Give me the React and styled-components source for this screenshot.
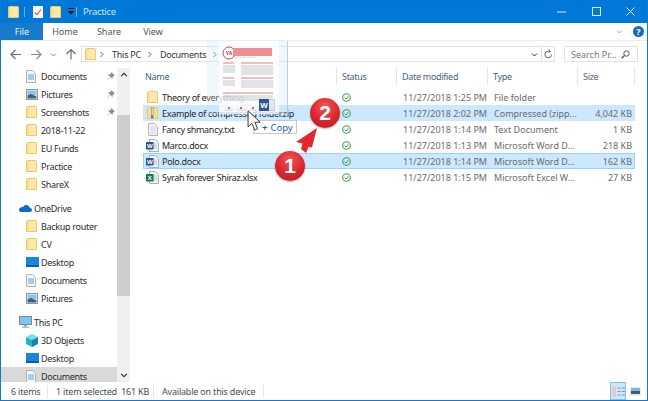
import React from "react"
import styled, { createGlobalStyle } from "styled-components"

const GlobalStyle = createGlobalStyle`
  html, body { margin: 0; padding: 0; background: #fff; }
  body { font-family: "Noto Sans", "Open Sans", sans-serif; font-size: 9px; color: #2b2b2b; }
`

const tabs = ["Home", "Share", "View"]

const sidebarGroups = [
  [
    { icon: "doc", label: "Documents", pin: true },
    { icon: "pic", label: "Pictures", pin: true },
    { icon: "folder", label: "Screenshots", pin: true },
    { icon: "folder", label: "2018-11-22" },
    { icon: "folder", label: "EU Funds" },
    { icon: "folder", label: "Practice" },
    { icon: "folder", label: "ShareX" },
  ],
  [
    { icon: "cloud", label: "OneDrive", top: true },
    { icon: "folder", label: "Backup router" },
    { icon: "folder", label: "CV" },
    { icon: "desktop", label: "Desktop" },
    { icon: "doc", label: "Documents" },
    { icon: "pic", label: "Pictures" },
  ],
  [
    { icon: "pc", label: "This PC", top: true },
    { icon: "cube", label: "3D Objects" },
    { icon: "desktop", label: "Desktop" },
    { icon: "doc", label: "Documents", current: true },
  ],
]

const files = [
  { icon: "folder", name: "Theory of everything", date: "11/27/2018 1:25 PM", type: "File folder", size: "" },
  { icon: "zip", name: "Example of compressed folder.zip", date: "11/27/2018 2:02 PM", type: "Compressed (zipp...", size: "4,042 KB", hl: "soft" },
  { icon: "txt", name: "Fancy shmancy.txt", date: "11/27/2018 1:14 PM", type: "Text Document", size: "1 KB" },
  { icon: "word", name: "Marco.docx", date: "11/27/2018 1:13 PM", type: "Microsoft Word D...", size: "218 KB" },
  { icon: "word", name: "Polo.docx", date: "11/27/2018 1:14 PM", type: "Microsoft Word D...", size: "162 KB", hl: "selected" },
  { icon: "excel", name: "Syrah forever Shiraz.xlsx", date: "11/27/2018 1:15 PM", type: "Microsoft Excel W...", size: "27 KB" },
]

function Glyph({ kind }) {
  switch (kind) {
    case "folder":
      return (
        <svg width="11" height="12" viewBox="0 0 11 12">
          <path d="M0.5 1.5 Q0.5 0.5 1.5 0.5 H9.5 Q10.5 0.5 10.5 1.5 V11.5 H0.5 Z" fill="#fbdc8a" stroke="#eec766" />
          <rect x="2.6" y="1" width="7.5" height="10" fill="#fde9ab" />
        </svg>
      )
    case "zip":
      return (
        <svg width="11" height="12" viewBox="0 0 11 12">
          <path d="M0.5 1.5 Q0.5 0.5 1.5 0.5 H9.5 Q10.5 0.5 10.5 1.5 V11.5 H0.5 Z" fill="#fbdc8a" stroke="#eec766" />
          <rect x="4" y="0.5" width="2.4" height="11" fill="#6f7f92" />
          <rect x="4.6" y="1" width="1.2" height="7" fill="#e8edf2" />
        </svg>
      )
    case "doc":
      return (
        <svg width="10" height="13" viewBox="0 0 10 13">
          <path d="M0.5 0.5 H6.5 L9.5 3.5 V12.5 H0.5 Z" fill="#f4f6f8" stroke="#a9b1ba" />
          <path d="M2 5 H8 M2 7 H8 M2 9 H8" stroke="#5da4dd" strokeWidth="1.1" />
        </svg>
      )
    case "txt":
      return (
        <svg width="10" height="13" viewBox="0 0 10 13">
          <path d="M0.5 0.5 H6.5 L9.5 3.5 V12.5 H0.5 Z" fill="#f5f5f5" stroke="#b5b5b5" />
          <path d="M2 4 H8 M2 6 H8 M2 8 H8 M2 10 H8" stroke="#d2d2d2" />
        </svg>
      )
    case "word":
    case "excel": {
      const tone = kind === "word" ? "#2b5797" : "#1f7a45"
      return (
        <svg width="13" height="13" viewBox="0 0 13 13">
          <path d="M3.5 0.5 H9.5 L12.5 3.5 V12.5 H3.5 Z" fill="#f4f5f7" stroke="#a6adb6" />
          <path d="M7 5 H11 M7 7 H11 M7 9 H11" stroke="#b9c0c9" />
          <rect x="0" y="3" width="7.5" height="7.5" fill={tone} />
          <text x="3.7" y="9" fontSize="6" fontWeight="700" fill="#fff" textAnchor="middle" fontFamily="Liberation Sans">
            {kind === "word" ? "W" : "X"}
          </text>
        </svg>
      )
    }
    case "pic":
      return (
        <svg width="12" height="11" viewBox="0 0 12 11">
          <rect x="0.5" y="0.5" width="11" height="10" fill="#f0f2f4" stroke="#8f98a3" />
          <rect x="1.5" y="1.5" width="9" height="5" fill="#8fc3ee" />
          <path d="M1.5 9.5 V6.5 L5 5 L10.5 7.5 V9.5 Z" fill="#44616e" />
        </svg>
      )
    case "desktop":
      return (
        <svg width="13" height="10" viewBox="0 0 13 10">
          <rect x="0" y="0" width="13" height="10" fill="#1687e0" />
          <rect x="0" y="8" width="13" height="2" fill="#0b5fa8" />
        </svg>
      )
    case "cloud":
      return (
        <svg width="13" height="8" viewBox="0 0 13 8">
          <path d="M3 8 H11 Q13 8 13 6 Q13 4 11 4 Q10 1 7 1 Q5 1 4 3 Q0 3 0 6 Q0 8 3 8 Z" fill="#0f6cc4" />
        </svg>
      )
    case "pc":
      return (
        <svg width="13" height="12" viewBox="0 0 13 12">
          <rect x="0.5" y="0.5" width="12" height="8" fill="#7cc6f2" stroke="#7d8a96" />
          <rect x="5" y="9" width="3" height="1.5" fill="#8d99a5" />
          <rect x="3" y="10.5" width="7" height="1.5" fill="#b3bcc5" />
        </svg>
      )
    case "cube":
      return (
        <svg width="12" height="13" viewBox="0 0 12 13">
          <path d="M6 0 L12 3 L6 6 L0 3 Z" fill="#6fe0ea" />
          <path d="M0 3 L6 6 V13 L0 10 Z" fill="#23b4c9" />
          <path d="M12 3 L6 6 V13 L12 10 Z" fill="#108aa6" />
        </svg>
      )
    default:
      return null
  }
}

const StatusCheck = () => (
  <svg width="9" height="9" viewBox="0 0 9 9">
    <circle cx="4.5" cy="4.5" r="3.8" fill="none" stroke="#3fa34d" strokeWidth="1.1" />
    <path d="M2.6 4.6 L4 6 L6.5 3.2" fill="none" stroke="#3fa34d" strokeWidth="1" />
  </svg>
)

const PinIcon = () => (
  <svg width="8" height="8" viewBox="0 0 8 8">
    <path d="M4.6 0.5 L7.5 3.4 L6.6 3.9 L5.4 5 L5.2 6.6 L1.4 2.8 L3 2.6 L4.1 1.4 Z M2.8 5.2 L0.6 7.4" fill="#8b8b8b" stroke="#8b8b8b" strokeWidth="0.5" />
  </svg>
)

const Chevron = ({ dir = "right", color = "#666", size = 7 }) => {
  const points = {
    right: "2.5,1 5,3.5 2.5,6",
    down: "1,2.5 3.5,5 6,2.5",
    up: "1,4.5 3.5,2 6,4.5",
  }[dir]
  return (
    <svg width={size} height={size} viewBox="0 0 7 7">
      <polyline points={points} fill="none" stroke={color} strokeWidth="1" />
    </svg>
  )
}

const NavArrow = ({ flip, up, color }) => (
  <NavGlyph $flip={flip} $up={up} width="12" height="11" viewBox="0 0 12 11">
    <path d="M1 5.5 H11 M6.5 1 L11 5.5 L6.5 10" fill="none" stroke={color} strokeWidth="1.2" />
  </NavGlyph>
)

function DragGhost() {
  return (
    <Ghost>
      <GhostPage>
        <svg width="60" height="73" viewBox="0 0 60 73">
          <circle cx="10" cy="12" r="6" fill="#fff" stroke="#d9454f" strokeWidth="1" />
          <text x="10" y="14" fontSize="5" fontWeight="700" fill="#c8232c" textAnchor="middle" fontFamily="Liberation Sans">YA</text>
          <rect x="14" y="7" width="39" height="8" fill="#ee8f95" />
          <path d="M4 22 H15 M22 22 H54 M4 37 H15 M22 37 H54 M4 52 H54" stroke="#d8636b" strokeWidth="0.8" />
          <path d="M4 25 H16 M4 27 H16 M4 29 H16 M4 31 H16 M22 25 H54 M22 27 H54 M22 29 H54 M22 31 H54 M22 33 H54 M4 40 H16 M4 42 H16 M4 44 H16 M22 40 H54 M22 42 H54 M22 44 H54 M22 46 H54 M4 55 H54 M4 57 H54 M4 59 H40" stroke="#b7bcc2" strokeWidth="0.8" />
          <path d="M6 69 H14 M18 69 H28 M30 69 H38" stroke="#c8c8c8" strokeWidth="0.8" />
          <path d="M9 67 H11 M21 67 H23 M33 67 H35" stroke="#c9303a" strokeWidth="1.4" />
        </svg>
      </GhostPage>
      <GhostWord>
        <svg width="16" height="12" viewBox="0 0 16 12">
          <rect x="8" y="0" width="8" height="12" fill="#dfe6ef" stroke="#8ea3bd" strokeWidth="0.6" />
          <rect x="0" y="0" width="10" height="12" fill="#2b5797" />
          <text x="5" y="9" fontSize="8" fontWeight="700" fill="#fff" textAnchor="middle" fontFamily="Liberation Sans">W</text>
        </svg>
      </GhostWord>
    </Ghost>
  )
}

export default function App() {
  return (
    <>
      <GlobalStyle />
      <Window>
        <TitleBar>
          <Glyph kind="folder" />
          <TitleSep />
          <QuickTools>
            <svg width="10" height="12" viewBox="0 0 10 12">
              <rect x="0" y="0" width="10" height="12" fill="#fafafa" />
              <path d="M2 6.5 L4 8.5 L8 3.5" fill="none" stroke="#d9622b" strokeWidth="1.2" />
            </svg>
            <Glyph kind="folder" />
            <svg width="6" height="7" viewBox="0 0 6 7">
              <rect x="0" y="0" width="6" height="1" fill="#111" />
              <path d="M0 3 H6 L3 6.5 Z" fill="#111" />
            </svg>
          </QuickTools>
          <TitleSep $tight />
          <TitleText>Practice</TitleText>
          <WindowControls>
            <svg width="9" height="9" viewBox="0 0 9 9"><path d="M0 5 H9" stroke="#dceaf8" /></svg>
            <svg width="9" height="9" viewBox="0 0 9 9"><rect x="0.5" y="0.5" width="8" height="8" fill="none" stroke="#dceaf8" /></svg>
            <svg width="9" height="9" viewBox="0 0 9 9"><path d="M0.5 0.5 L8.5 8.5 M8.5 0.5 L0.5 8.5" stroke="#eaf3fb" /></svg>
          </WindowControls>
        </TitleBar>

        <Ribbon>
          <FileTab>File</FileTab>
          {tabs.map((t) => <RibbonTab key={t}>{t}</RibbonTab>)}
          <RibbonEnd>
            <Chevron dir="down" color="#a9a9a9" />
            <HelpBadge>?</HelpBadge>
          </RibbonEnd>
        </Ribbon>

        <AddressRow>
          <NavButtons>
            <NavArrow flip color="#6d6d6d" />
            <NavArrow color="#8c8c8c" />
            <Chevron dir="down" color="#888" />
            <NavArrow up color="#6d6d6d" />
          </NavButtons>
          <AddressBox>
            <Crumbs>
              <Glyph kind="folder" />
              <Chevron />
              <CrumbText>This PC</CrumbText>
              <Chevron />
              <CrumbText>Documents</CrumbText>
              <Chevron />
              <CrumbText>Practice</CrumbText>
            </Crumbs>
            <AddressTools>
              <Chevron dir="down" color="#333" />
              <RefreshCell>
                <svg width="9" height="10" viewBox="0 0 9 10">
                  <path d="M7.5 5.5 A3.3 3.3 0 1 1 4.5 2.2 H6 M4.6 0.5 L6.3 2.2 L4.6 3.9" fill="none" stroke="#666" strokeWidth="1" />
                </svg>
              </RefreshCell>
            </AddressTools>
          </AddressBox>
          <SearchBox>
            <span>Search Pr...</span>
            <svg width="9" height="9" viewBox="0 0 9 9">
              <circle cx="5.5" cy="3.5" r="2.7" fill="none" stroke="#555" />
              <path d="M3.5 5.5 L0.7 8.3" stroke="#555" strokeWidth="1.3" />
            </svg>
          </SearchBox>
        </AddressRow>

        <Body>
          <Sidebar>
            <TreeList>
              {sidebarGroups.map((group, i) => (
                <TreeGroup key={i}>
                  {group.map((item, j) => (
                    <TreeRow key={j} $top={item.top} $current={item.current}>
                      <TreeIcon><Glyph kind={item.icon} /></TreeIcon>
                      <span>{item.label}</span>
                      {item.pin && <PinSlot><PinIcon /></PinSlot>}
                    </TreeRow>
                  ))}
                </TreeGroup>
              ))}
            </TreeList>
            <ScrollTrack>
              <Chevron dir="up" color="#333" size={8} />
              <ScrollThumb />
              <Chevron dir="down" color="#333" size={8} />
            </ScrollTrack>
          </Sidebar>

          <FilePane>
            <HeaderRow>
              <HeaderCell>Name</HeaderCell>
              <HeaderCell>Status</HeaderCell>
              <HeaderCell>Date modified</HeaderCell>
              <HeaderCell>Type</HeaderCell>
              <HeaderCell>Size</HeaderCell>
            </HeaderRow>
            <Rows>
              {files.map((f) => (
                <FileRow key={f.name} $hl={f.hl}>
                  <NameCell>
                    <FileIcon><Glyph kind={f.icon} /></FileIcon>
                    <span>{f.name}</span>
                  </NameCell>
                  <StatusCell><StatusCheck /></StatusCell>
                  <MutedCell>{f.date}</MutedCell>
                  <MutedCell>{f.type}</MutedCell>
                  <SizeCell>{f.size}</SizeCell>
                </FileRow>
              ))}
            </Rows>
          </FilePane>
        </Body>

        <StatusBar>
          <StatusPart $w={37}>6 items</StatusPart>
          <StatusPart $w={98}>1 item selected&nbsp;&nbsp;161 KB</StatusPart>
          <StatusPart $w={102}>Available on this device</StatusPart>
          <ViewButtons>
            <ViewButton $active>
              <svg width="13" height="11" viewBox="0 0 13 11">
                <rect x="0" y="0" width="4" height="11" fill="#e9c9c4" />
                <path d="M5.5 2 H8.5 M9.5 2 H13 M5.5 5.5 H8.5 M9.5 5.5 H13 M5.5 9 H8.5 M9.5 9 H13" stroke="#8d9aa8" />
              </svg>
            </ViewButton>
            <ViewButton>
              <svg width="11" height="9" viewBox="0 0 11 9">
                <rect x="0" y="0" width="11" height="9" fill="#e6e8ea" />
                <rect x="1" y="1" width="9" height="3" fill="#79b8ee" />
                <rect x="1" y="4" width="9" height="3" fill="#3d5f6b" />
              </svg>
            </ViewButton>
          </ViewButtons>
        </StatusBar>

        <DragGhost />
        <CopyTip><b>+</b><span>Copy</span></CopyTip>
        <Cursor>
          <svg width="16" height="24" viewBox="0 0 15 21">
            <path d="M1 1 V16 L4.6 12.8 L7.2 19 L10 17.8 L7.4 11.8 L12.4 11.6 Z" fill="#fff" stroke="#333" strokeWidth="0.9" />
          </svg>
        </Cursor>
        <StepArrow>
          <svg width="23" height="27" viewBox="0 0 23 27">
            <path d="M22 1 L1 15 L7.5 16.5 L6 22 L11 26 L13.5 20 L17 20.5 Z" fill="#e0282e" />
          </svg>
        </StepArrow>
        <StepBadge $x={274} $y={151}>1</StepBadge>
        <StepBadge $x={309} $y={98}>2</StepBadge>
      </Window>
    </>
  )
}

const Window = styled.div`
  position: relative;
  width: 648px;
  height: 401px;
  box-sizing: border-box;
  border: 1px solid #0f7ad6;
  border-top: 0;
  background: #fff;
  display: flex;
  flex-direction: column;
  overflow: hidden;
`

const TitleBar = styled.div`
  height: 23px;
  margin: 0 -1px;
  padding-left: 8px;
  background: #0078d7;
  display: flex;
  align-items: center;
  flex: none;
`

const TitleSep = styled.i`
  width: 1px;
  height: 10px;
  margin: 0 6px 0 ${(p) => (p.$tight ? "2px" : "5px")};
  background: #6eaee6;
`

const QuickTools = styled.div`
  display: flex;
  align-items: center;
  gap: 7px;
  margin-left: 2px;
`

const TitleText = styled.span`
  color: #cfe5f8;
  font-size: 9.5px;
  letter-spacing: -0.3px;
`

const WindowControls = styled.div`
  margin-left: auto;
  width: 78px;
  margin-right: 13px;
  display: flex;
  justify-content: space-between;
`

const Ribbon = styled.div`
  height: 18px;
  flex: none;
  display: flex;
  align-items: stretch;
  border-bottom: 1px solid #ececec;
  box-sizing: border-box;
`

const FileTab = styled.div`
  width: 42px;
  background: #1979ca;
  color: #e4f0fa;
  display: flex;
  align-items: center;
  justify-content: center;
`

const RibbonTab = styled.div`
  width: 44px;
  display: flex;
  align-items: center;
  justify-content: center;
  color: #555;
`

const RibbonEnd = styled.div`
  margin-left: auto;
  display: flex;
  align-items: center;
  gap: 10px;
  padding-right: 3px;
`

const HelpBadge = styled.span`
  width: 11px;
  height: 11px;
  border-radius: 50%;
  background: #0f6cc4;
  color: #fff;
  font-size: 9px;
  font-weight: 700;
  line-height: 11px;
  text-align: center;
`

const AddressRow = styled.div`
  height: 25px;
  flex: none;
  display: flex;
  align-items: center;
  padding-top: 1px;
  box-sizing: border-box;
`

const NavButtons = styled.div`
  width: 80px;
  box-sizing: border-box;
  padding: 0 4px 0 9px;
  display: flex;
  align-items: center;
  justify-content: space-between;
`

const NavGlyph = styled.svg`
  transform: ${(p) => (p.$flip ? "scaleX(-1)" : p.$up ? "rotate(-90deg)" : "none")};
`

const AddressBox = styled.div`
  width: 474px;
  height: 16px;
  box-sizing: border-box;
  border: 1px solid #e3e3e3;
  display: flex;
  align-items: center;
  justify-content: space-between;
  padding-left: 3px;
`

const Crumbs = styled.div`
  display: flex;
  align-items: center;
  gap: 2px;
  color: #333;
  letter-spacing: -0.25px;
`

const CrumbText = styled.span`
  margin: 0 3px 0 5px;
`

const AddressTools = styled.div`
  display: flex;
  align-items: center;
  gap: 3px;
  height: 100%;
`

const RefreshCell = styled.div`
  width: 12px;
  height: 100%;
  border-left: 1px solid #e3e3e3;
  display: flex;
  align-items: center;
  justify-content: center;
`

const SearchBox = styled.div`
  width: 74px;
  height: 16px;
  margin-left: 9px;
  box-sizing: border-box;
  border: 1px solid #e3e3e3;
  padding: 0 7px 0 6px;
  display: flex;
  align-items: center;
  justify-content: space-between;
  color: #777;
`

const Body = styled.div`
  flex: 1;
  min-height: 0;
  display: flex;
`

const Sidebar = styled.div`
  width: 129px;
  flex: none;
  display: flex;
  box-sizing: border-box;
  overflow: hidden;
`

const TreeList = styled.div`
  width: 116px;
  flex: none;
  padding-top: 1px;
  display: flex;
  flex-direction: column;
  gap: 6px;
`

const TreeGroup = styled.div`
  display: flex;
  flex-direction: column;
`

const TreeRow = styled.div`
  height: 18px;
  flex: none;
  display: flex;
  align-items: center;
  padding-left: ${(p) => (p.$top ? "18px" : "25px")};
  background: ${(p) => (p.$current ? "#d9d9d9" : "transparent")};
  color: #2d2d2d;
  letter-spacing: -0.3px;
`

const TreeIcon = styled.span`
  width: 15px;
  display: flex;
  align-items: center;
`

const PinSlot = styled.span`
  margin-left: auto;
  margin-right: 2px;
  display: flex;
`

const ScrollTrack = styled.div`
  width: 13px;
  flex: none;
  margin-top: 2px;
  background: #f0f0f0;
  display: flex;
  flex-direction: column;
  align-items: center;
  padding: 3px 0;
  box-sizing: border-box;
`

const ScrollThumb = styled.div`
  width: 100%;
  height: 181px;
  margin-top: 36px;
  margin-bottom: auto;
  background: #cdcdcd;
`

const FilePane = styled.div`
  flex: 1;
  min-width: 0;
  padding-top: 1px;
`

const columns = "194px 60px 91px 90px 57px"

const HeaderRow = styled.div`
  height: 18px;
  margin-left: 13px;
  display: grid;
  grid-template-columns: ${columns};
`

const HeaderCell = styled.div`
  padding-left: 2px;
  border-right: 1px solid #e5e5e5;
  display: flex;
  align-items: center;
  color: #4c607a;
  letter-spacing: -0.3px;
  &:not(:first-child) { padding-left: 5px; }
`

const Rows = styled.div`
  margin-top: 4px;
  margin-left: 13px;
  width: 492px;
  display: flex;
  flex-direction: column;
`

const FileRow = styled.div`
  height: 16px;
  box-sizing: border-box;
  display: grid;
  grid-template-columns: ${columns};
  align-items: center;
  background: ${(p) => (p.$hl ? "#cce8ff" : "transparent")};
  outline: ${(p) => (p.$hl === "selected" ? "1px solid #99d1ff" : "none")};
  outline-offset: -1px;
`

const NameCell = styled.div`
  display: flex;
  align-items: center;
  color: #262626;
  white-space: nowrap;
  letter-spacing: -0.3px;
`

const FileIcon = styled.span`
  width: 13px;
  margin: 0 3px;
  display: flex;
  align-items: center;
  justify-content: center;
`

const StatusCell = styled.div`
  padding-left: 5px;
  display: flex;
  align-items: center;
`

const MutedCell = styled.div`
  padding-left: 6px;
  color: #6b6b6b;
  white-space: nowrap;
`

const SizeCell = styled.div`
  padding-right: 3px;
  color: #6b6b6b;
  text-align: right;
`

const StatusBar = styled.div`
  height: 18px;
  flex: none;
  display: flex;
  align-items: center;
  padding-left: 10px;
  color: #4d4d4d;
  letter-spacing: -0.2px;
`

const StatusPart = styled.div`
  width: ${(p) => p.$w}px;
  box-sizing: border-box;
  margin-right: 8px;
  border-right: 1px solid #e6e6e6;
  white-space: nowrap;
`

const ViewButtons = styled.div`
  margin-left: auto;
  display: flex;
  align-items: center;
  gap: 4px;
  padding-right: 6px;
  height: 100%;
`

const ViewButton = styled.div`
  width: ${(p) => (p.$active ? "16px" : "11px")};
  height: 100%;
  box-sizing: border-box;
  display: flex;
  align-items: center;
  justify-content: center;
  background: ${(p) => (p.$active ? "#cce8ff" : "transparent")};
  border: ${(p) => (p.$active ? "1px solid #7cc4f5" : "0")};
`

/* everything below floats over the window: the drag image and the callouts */
const Ghost = styled.div`
  position: absolute;
  left: 206px;
  top: 41px;
  width: 80px;
  height: 74px;
  background: rgba(205, 230, 248, 0.3);
  border-right: 1px solid rgba(170, 190, 205, 0.7);
`

const GhostPage = styled.div`
  position: absolute;
  left: 12px;
  top: 0;
  width: 60px;
  height: 73px;
  background: rgba(255, 255, 255, 0.72);
`

const GhostWord = styled.div`
  position: absolute;
  left: 52px;
  top: 58px;
  display: flex;
`

const Cursor = styled.div`
  position: absolute;
  left: 246px;
  top: 109px;
  display: flex;
`

const CopyTip = styled.div`
  position: absolute;
  left: 252px;
  top: 120px;
  width: 44px;
  height: 14px;
  box-sizing: border-box;
  background: #fff;
  border: 1px solid #c8c8c8;
  color: #1a62c4;
  font-size: 9.5px;
  padding-left: 8px;
  display: flex;
  align-items: center;
  gap: 3px;
  white-space: nowrap;
`

const StepArrow = styled.div`
  position: absolute;
  left: 294px;
  top: 127px;
  display: flex;
`

const StepBadge = styled.div`
  position: absolute;
  left: ${(p) => p.$x}px;
  top: ${(p) => p.$y}px;
  width: 30px;
  height: 30px;
  border-radius: 50%;
  background: radial-gradient(circle at 50% 30%, #f0555a 0%, #d9252b 55%, #b91c22 100%);
  color: #fff;
  font-family: "Liberation Sans", sans-serif;
  font-size: 21px;
  font-weight: 700;
  line-height: 30px;
  text-align: center;
  box-shadow: 0 1px 2px rgba(0, 0, 0, 0.3);
`
